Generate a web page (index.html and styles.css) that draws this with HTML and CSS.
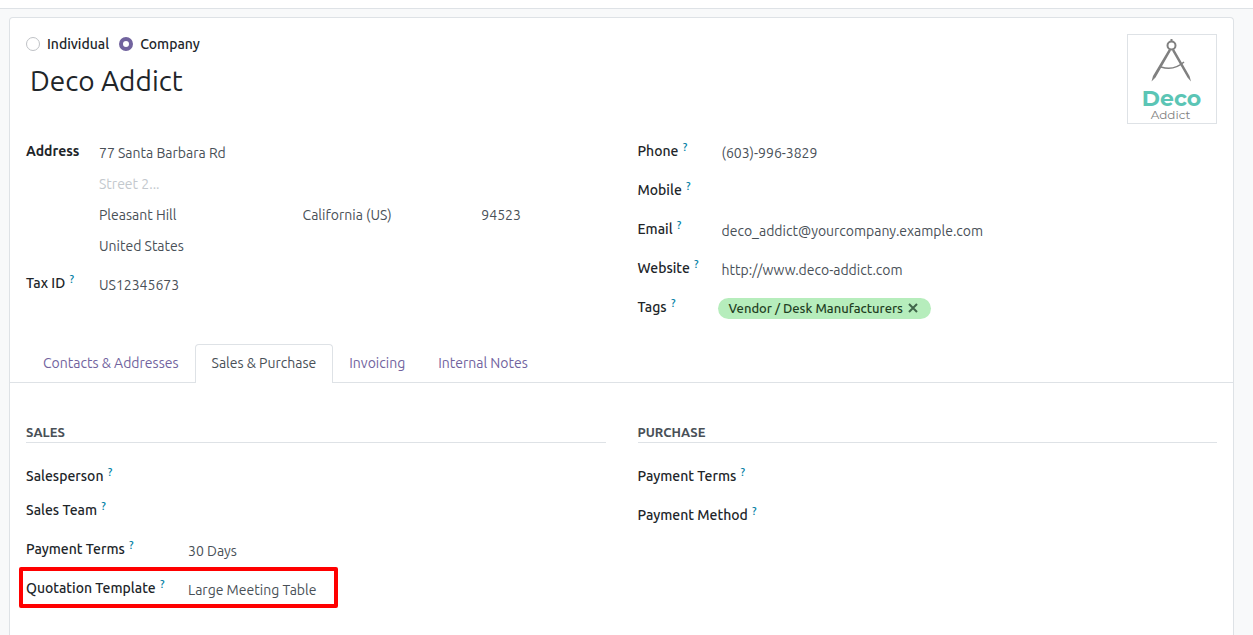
FILE: index.html
```html
<!DOCTYPE html>
<html lang="en">
<head>
<meta charset="utf-8">
<meta name="viewport" content="width=device-width, initial-scale=1">
<title>Deco Addict</title>
<link rel="stylesheet" href="styles.css">
</head>
<body>
<div class="topbar"></div>
<main class="sheet">
  <header class="head">
    <div class="identity">
      <div class="kinds">
        <label class="kind"><input class="radio" type="radio" name="kind">Individual</label>
        <label class="kind"><input class="radio" type="radio" name="kind" checked>Company</label>
      </div>
      <input class="name" type="text" value="Deco Addict" aria-label="Name">
    </div>
    <svg class="logo" viewBox="0 0 88 88" role="img" aria-label="Deco Addict logo">
      <g fill="none" stroke="#808080">
        <circle cx="43.500" cy="10.500" r="4" stroke-width="2"/>
        <path d="M43.500 4v3" stroke-width="2"/>
        <path d="M33 32Q46 36 56 27" stroke-width="1.500"/>
      </g>
      <path d="M41 14l2 1.500L27.500 42.500l-4 4 1.500-5.500zM46 14L44 15.500 59.500 42.500l3.500 4-1.500-5.500z" fill="#808080"/>
      <text class="logo-main" x="43.500" y="71" text-anchor="middle">Deco</text>
      <text class="logo-sub" x="42.500" y="84" text-anchor="middle">Addict</text>
    </svg>
  </header>

  <div class="columns">
    <div class="fields fields-address">
      <label class="label label-bold" for="street">Address</label>
      <div class="address">
        <input class="value wide" id="street" type="text" value="77 Santa Barbara Rd">
        <input class="value wide" type="text" placeholder="Street 2..." aria-label="Street 2">
        <input class="value" type="text" value="Pleasant Hill" aria-label="City">
        <input class="value" type="text" value="California (US)" aria-label="State">
        <input class="value" type="text" value="94523" aria-label="ZIP">
        <input class="value wide" type="text" value="United States" aria-label="Country">
      </div>
      <label class="label" for="vat">Tax ID <sup>?</sup></label>
      <input class="value" id="vat" type="text" value="US12345673">
    </div>
    <div class="fields fields-contact">
      <label class="label" for="phone">Phone <sup>?</sup></label>
      <input class="value" id="phone" type="tel" value="(603)-996-3829">
      <label class="label" for="mobile">Mobile <sup>?</sup></label>
      <input class="value" id="mobile" type="tel">
      <label class="label" for="email">Email <sup>?</sup></label>
      <input class="value" id="email" type="email" value="deco_addict@yourcompany.example.com">
      <label class="label" for="website">Website <sup>?</sup></label>
      <input class="value" id="website" type="url" value="http://www.deco-addict.com">
      <span class="label">Tags <sup>?</sup></span>
      <div class="tags">
        <span class="tag">Vendor / Desk Manufacturers
          <button class="tag-remove" type="button" aria-label="Remove tag"><svg viewBox="0 0 10 10"><path d="M1 1l8 8M9 1l-8 8"/></svg></button>
        </span>
      </div>
    </div>
  </div>

  <nav class="tabs">
    <a class="tab" href="#contacts">Contacts &amp; Addresses</a>
    <a class="tab tab-active" href="#sales" aria-current="page">Sales &amp; Purchase</a>
    <a class="tab" href="#invoicing">Invoicing</a>
    <a class="tab" href="#notes">Internal Notes</a>
  </nav>

  <div class="columns panel">
    <section>
      <h2 class="heading">Sales</h2>
      <div class="rows">
        <div class="row row-compact">
          <label class="label" for="salesperson">Salesperson <sup>?</sup></label>
          <input class="value" id="salesperson" type="text">
        </div>
        <div class="row">
          <label class="label" for="team">Sales Team <sup>?</sup></label>
          <input class="value" id="team" type="text">
        </div>
        <div class="row">
          <label class="label" for="sale-terms">Payment Terms <sup>?</sup></label>
          <input class="value" id="sale-terms" type="text" value="30 Days">
        </div>
        <div class="row row-marked">
          <label class="label" for="template">Quotation Template <sup>?</sup></label>
          <input class="value" id="template" type="text" value="Large Meeting Table">
        </div>
      </div>
    </section>
    <section>
      <h2 class="heading">Purchase</h2>
      <div class="rows">
        <div class="row">
          <label class="label" for="buy-terms">Payment Terms <sup>?</sup></label>
          <input class="value" id="buy-terms" type="text">
        </div>
        <div class="row">
          <label class="label" for="buy-method">Payment Method <sup>?</sup></label>
          <input class="value" id="buy-method" type="text">
        </div>
      </div>
    </section>
  </div>
</main>
</body>
</html>
```
FILE: styles.css
```css
*,
::after {
  box-sizing: border-box;
}

html,
body {
  height: 100%;
}

body {
  display: flex;
  flex-direction: column;
  margin: 0;
  overflow: hidden;
  background: #f8f9fa;
  color: #212529;
  font: 14px/20px Ubuntu, "Open Sans", "Noto Sans", sans-serif;
}

input,
button {
  margin: 0;
  padding: 0;
  border: 0;
  outline: 0;
  background: none;
  color: inherit;
  font: inherit;
}

.topbar {
  flex: none;
  height: 9px;
  border-bottom: 1px solid #dee2e6;
  background: #fff;
}

.sheet {
  flex: 1 0 auto;
  margin: 8px 19px 0 9px;
  padding: 16px;
  border: 1px solid #dee2e6;
  border-bottom: 0;
  border-radius: 4px 4px 0 0;
  background: #fff;
}

.head {
  display: flex;
  gap: 16px;
  margin-bottom: 17px;
}

.identity {
  flex: 1;
  min-width: 0;
}

.kinds {
  display: flex;
  gap: 10px;
  font-weight: 500;
}

.kind {
  display: flex;
  align-items: center;
  gap: 7px;
}

.radio {
  width: 14px;
  height: 14px;
  border: 1px solid #bfc2c6;
  border-radius: 50%;
  background: #fff;
  appearance: none;
}

.radio:checked {
  border: 4px solid #71639e;
}

.name {
  width: 100%;
  height: 40px;
  margin-top: 6px;
  padding-left: 4px;
  font-size: 28px;
}

.logo {
  flex: none;
  width: 90px;
  height: 90px;
  border: 1px solid #dee2e6;
}

.logo-main {
  fill: #5bc5b5;
  font: 700 22px Montserrat, Inter, sans-serif;
}

.logo-sub {
  fill: #808080;
  font: 12px Montserrat, Inter, sans-serif;
}

.columns {
  display: grid;
  grid-template-columns: 1fr 1fr;
  column-gap: 32px;
}

.fields {
  display: grid;
  align-content: start;
  align-items: start;
  row-gap: 16px;
}

.fields-address {
  grid-template-columns: 73px 1fr;
}

.fields-contact {
  grid-template-columns: 84px 1fr;
}

.label {
  font-weight: 500;
  white-space: nowrap;
}

.label-bold {
  font-weight: 700;
}

sup {
  margin-left: 1px;
  color: #0180a5;
  font-size: 11px;
  line-height: 0;
  vertical-align: 5px;
}

.value {
  width: 100%;
  min-width: 0;
  height: 23px;
  color: #495057;
}

.value::placeholder {
  color: #c3c8cd;
  opacity: 1;
}

.address {
  display: grid;
  grid-template-columns: 41fr 36fr 25fr;
  row-gap: 8px;
}

.wide {
  grid-column: 1 / -1;
}

.tags {
  display: flex;
  height: 23px;
  margin-left: -4px;
  align-items: center;
}

.tag {
  display: flex;
  align-items: center;
  gap: 5px;
  height: 21px;
  padding: 0 13px 1px 11px;
  border-radius: 11px;
  background: #b6edbc;
  color: #1f4023;
  font-size: 13px;
  font-weight: 500;
}

.tag-remove {
  display: flex;
}

.tag-remove svg {
  width: 10px;
  height: 10px;
  fill: none;
  stroke: #40664a;
  stroke-width: 2;
}

.tabs {
  display: flex;
  margin: 24px -16px 0;
  padding-left: 16px;
  border-bottom: 1px solid #dee2e6;
}

.tab {
  margin: 0 0 -1px;
  padding: 8px 16px 10px;
  border: 1px solid transparent;
  border-bottom: 0;
  border-radius: 4px 4px 0 0;
  color: #71639e;
  text-decoration: none;
}

.tab + .tab {
  margin-left: -1px;
}

.tab-active {
  border-color: #dee2e6;
  background: #fff;
  color: #495057;
}

.panel {
  margin-top: 40px;
}

.heading {
  margin: 0 0 23px;
  border-bottom: 1px solid #dee2e6;
  color: #495057;
  font-size: 13px;
  font-weight: 700;
  line-height: 19px;
  text-transform: uppercase;
}

.rows {
  display: grid;
  row-gap: 16px;
}

.row {
  display: grid;
  position: relative;
  grid-template-columns: 162px 1fr;
  align-items: start;
}

.row-compact,
.row-compact .value {
  height: 18px;
}

.row-marked::after {
  position: absolute;
  inset: -11px auto -7px -7px;
  width: 319px;
  border: 4px solid #f00;
  border-radius: 2px;
  content: "";
  pointer-events: none;
}
```
